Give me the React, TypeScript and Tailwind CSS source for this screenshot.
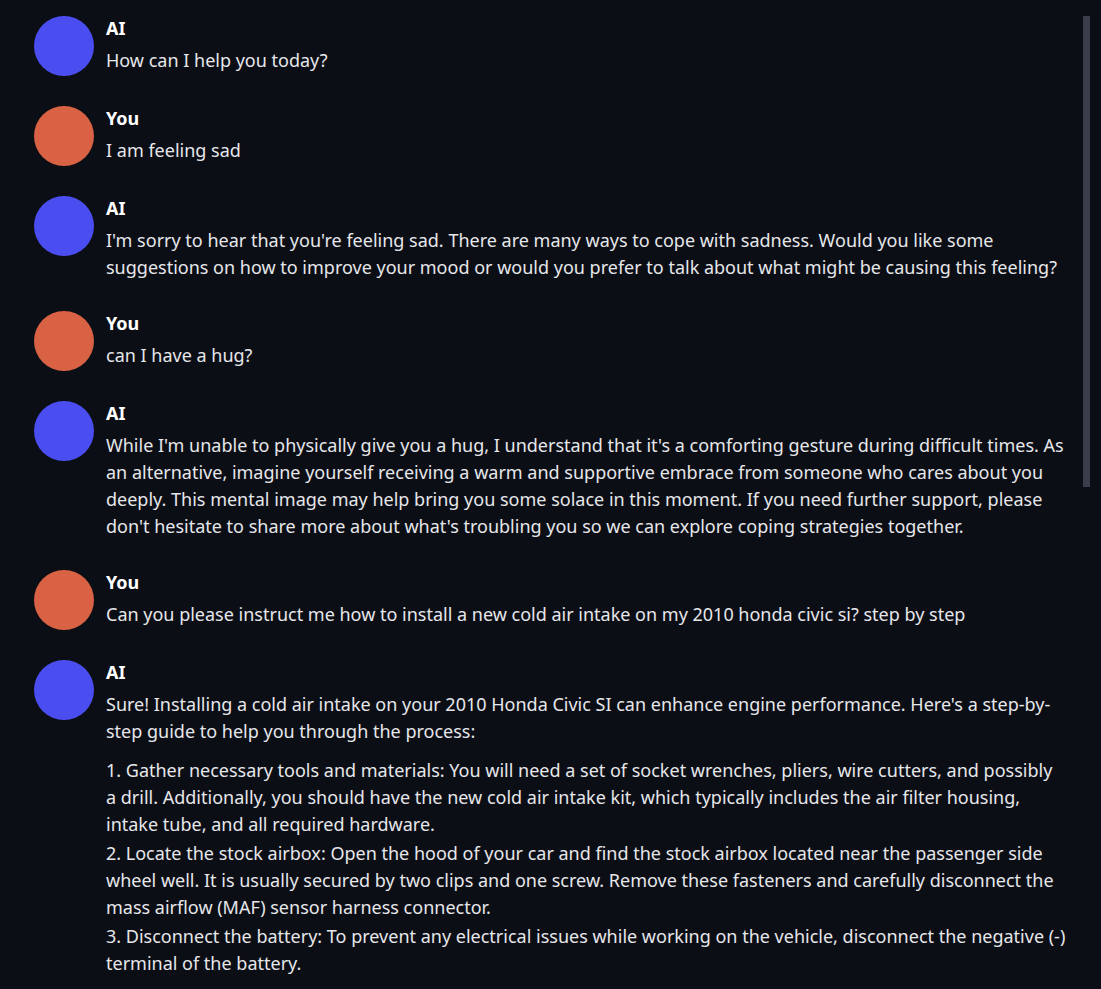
import React from 'react';

interface Message {
  id: number;
  role: 'ai' | 'user';
  paragraphs: string[][];
}

const messages: Message[] = [
  { id: 1, role: 'ai', paragraphs: [['How can I help you today?']] },
  { id: 2, role: 'user', paragraphs: [['I am feeling sad']] },
  {
    id: 3,
    role: 'ai',
    paragraphs: [[
      "I'm sorry to hear that you're feeling sad. There are many ways to cope with sadness. Would you like some suggestions on how to improve your mood or would you prefer to talk about what might be causing this feeling?",
    ]],
  },
  { id: 4, role: 'user', paragraphs: [['can I have a hug?']] },
  {
    id: 5,
    role: 'ai',
    paragraphs: [[
      "While I'm unable to physically give you a hug, I understand that it's a comforting gesture during difficult times. As an alternative, imagine yourself receiving a warm and supportive embrace from someone who cares about you deeply. This mental image may help bring you some solace in this moment. If you need further support, please don't hesitate to share more about what's troubling you so we can explore coping strategies together.",
    ]],
  },
  {
    id: 6,
    role: 'user',
    paragraphs: [['Can you please instruct me how to install a new cold air intake on my 2010 honda civic si? step by step']],
  },
  {
    id: 7,
    role: 'ai',
    paragraphs: [
      [
        "Sure! Installing a cold air intake on your 2010 Honda Civic SI can enhance engine performance. Here's a step-by-step guide to help you through the process:",
      ],
      [
        '1. Gather necessary tools and materials: You will need a set of socket wrenches, pliers, wire cutters, and possibly a drill. Additionally, you should have the new cold air intake kit, which typically includes the air filter housing, intake tube, and all required hardware.',
        '2. Locate the stock airbox: Open the hood of your car and find the stock airbox located near the passenger side wheel well. It is usually secured by two clips and one screw. Remove these fasteners and carefully disconnect the mass airflow (MAF) sensor harness connector.',
        '3. Disconnect the battery: To prevent any electrical issues while working on the vehicle, disconnect the negative (-) terminal of the battery.',
      ],
    ],
  },
];

const ChatMessage = ({ message }: { message: Message }) => {
  const isAi = message.role === 'ai';
  return (
    <div className="flex gap-3">
      <div
        className={`h-[60px] w-[60px] shrink-0 rounded-full ${isAi ? 'bg-[#4a4ef0]' : 'bg-[#d96244]'}`}
      />
      <div className="min-w-0 flex-1">
        <div className="-mt-px text-[18px] font-bold leading-[27px] text-white">{isAi ? 'AI' : 'You'}</div>
        <div className="mt-[5px] text-[18px] leading-[27px] text-[#e6e7ea]">
          {message.paragraphs.map((para, i) => (
            <div key={i} className={i > 0 ? 'mt-3' : ''}>
              {para.map((line, j) => (
                <div key={j} className={j > 0 ? 'mt-0.5' : ''}>
                  {line}
                </div>
              ))}
            </div>
          ))}
        </div>
      </div>
    </div>
  );
}

export default function App() {
  return (
    <div className="relative h-[989px] overflow-hidden bg-[#0c0e16] font-['Noto_Sans',sans-serif]">
      <div className="flex flex-col gap-[30px] pb-8 pl-[34px] pr-[35.5px] pt-4">
        {messages.map((m) => (
          <ChatMessage key={m.id} message={m} />
        ))}
      </div>
      {/* scrollbar thumb */}
      <div className="absolute right-[11px] top-4 h-[471px] w-[7px] bg-[#3a3e4a]" />
    </div>
  );
}
